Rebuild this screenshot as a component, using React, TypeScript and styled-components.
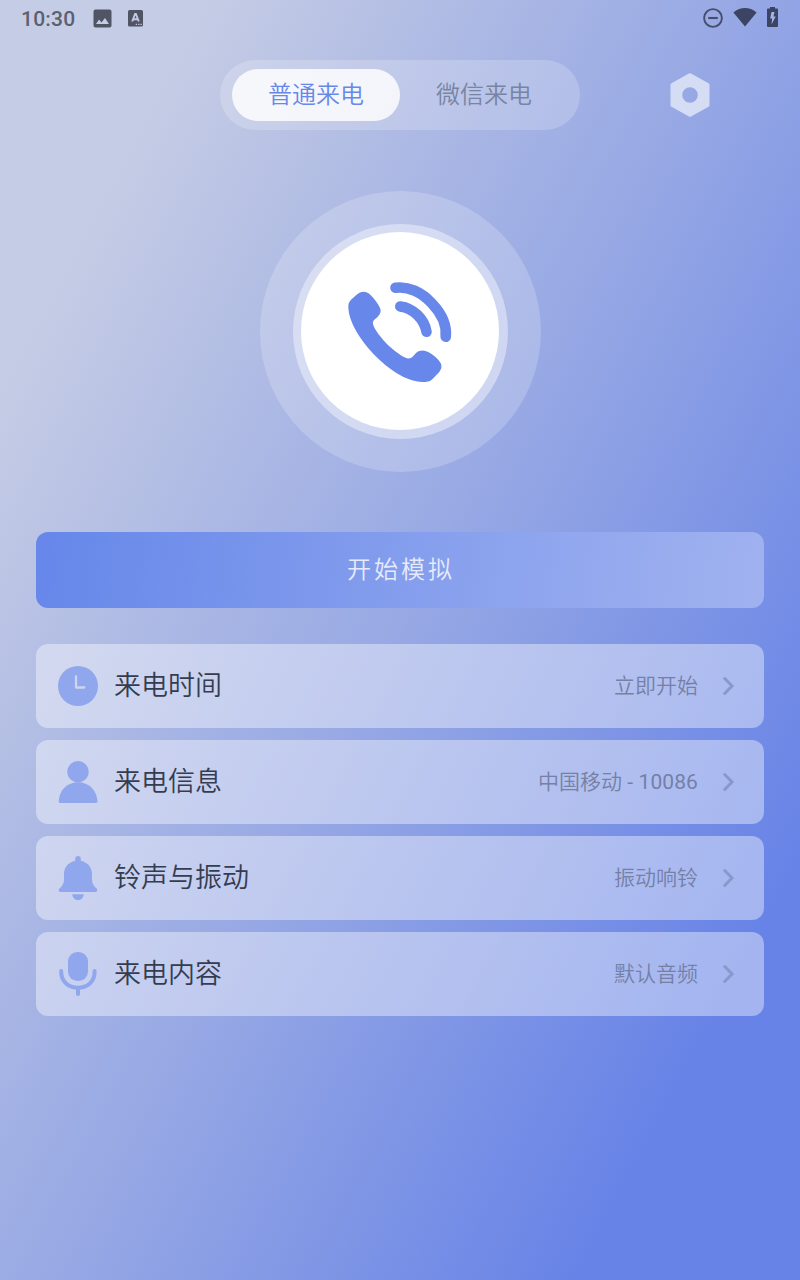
import React from "react";
import styled, { createGlobalStyle } from "styled-components";

const GlobalStyle = createGlobalStyle`
  * { box-sizing: border-box; }
  body { margin: 0; }
  button { font: inherit; border: 0; padding: 0; background: none; }
  svg { display: block; flex: none; }
`;

const Screen = styled.main`
  width: 800px;
  height: 1280px;
  overflow: hidden;
  display: flex;
  flex-direction: column;
  font-family: Roboto, "Noto Sans CJK SC", sans-serif;
  font-weight: 350;
  background: linear-gradient(118deg, #c5cce5 14%, #98a9e4 49%, #6783e7 85%);
`;

const StatusBar = styled.div`
  height: 36px;
  display: flex;
  align-items: center;
  justify-content: space-between;
  padding: 0 22px 0 21px;
`;

const StatusGroup = styled.div<{ $gap?: number }>`
  display: flex;
  align-items: center;
  gap: ${(p) => p.$gap ?? 0}px;
`;

const Clock = styled.span`
  width: 72px;
  font-size: 21px;
  line-height: 36px;
  padding-top: 1px;
  letter-spacing: 0.2px;
  font-weight: 500;
  color: #5c606f;
`;

const Header = styled.header`
  display: grid;
  grid-template-columns: 1fr 360px 1fr;
  margin-top: 24px;
  height: 70px;
  align-items: center;
`;

const Tabs = styled.div`
  grid-column: 2;
  height: 70px;
  border-radius: 35px;
  padding: 0 12px;
  display: flex;
  align-items: center;
  background: rgba(255, 255, 255, 0.2);
`;

const Tab = styled.button<{ $active?: boolean }>`
  width: 168px;
  height: 52px;
  border-radius: 26px;
  font-size: 24px;
  line-height: 51px;
  padding-top: 1px;
  color: ${(p) => (p.$active ? "#6788ea" : "#7884a3")};
  background: ${(p) => (p.$active ? "rgba(255, 255, 255, 0.82)" : "transparent")};
`;

const Settings = styled.button`
  justify-self: center;
  width: 40px;
`;

const CallHalo = styled.div`
  width: 281px;
  height: 281px;
  margin: 61px auto 0 260px;
  border-radius: 50%;
  display: flex;
  align-items: center;
  justify-content: center;
  background: rgba(255, 255, 255, 0.2);
`;

const CallDisc = styled.div`
  width: 215px;
  height: 215px;
  border-radius: 50%;
  padding: 8px 9px 9px 8px;
  background: rgba(255, 255, 255, 0.4);
`;

const CallCore = styled.div`
  width: 198px;
  height: 198px;
  border-radius: 50%;
  display: flex;
  align-items: center;
  justify-content: center;
  padding-top: 8px;
  background: #fff;
`;

const StartButton = styled.button`
  height: 76px;
  margin: 60px 36px 0;
  padding: 0 0 5px 2px;
  border-radius: 12px;
  font-size: 24px;
  letter-spacing: 3px;
  color: #e6ebfb;
  background: linear-gradient(98deg, #6788ea 2%, #8da4ee 65%, #9fb1ef 98%);
`;

const List = styled.div`
  display: flex;
  flex-direction: column;
  gap: 12px;
  margin: 36px 36px 0;
`;

const Row = styled.div`
  height: 84px;
  border-radius: 12px;
  display: flex;
  align-items: center;
  padding: 0 29px 0 21px;
  background: rgba(255, 255, 255, 0.4);
`;

const RowLabel = styled.span`
  flex: 1;
  margin-left: 15px;
  padding-bottom: 1px;
  font-size: 27px;
  line-height: 40px;
  color: #343d50;
`;

const RowValue = styled.span`
  margin-right: 24px;
  font-size: 21px;
  line-height: 32px;
  color: #7480a6;
`;

const Digits = styled.span`
  font-weight: 400;
  letter-spacing: 0.1px;
`;

const ImageIcon = () => (
  <svg width="19" height="19" viewBox="0 0 19 19" fill="#505463">
    <path fillRule="evenodd" d="M2.500.5h14a2 2 0 0 1 2 2v14a2 2 0 0 1-2 2h-14a2 2 0 0 1-2-2v-14a2 2 0 0 1 2-2zM3 15h13l-4-6-3.500 4.500-2.500-3z" />
  </svg>
);

const LetterIcon = () => (
  <svg width="15" height="17" viewBox="0 0 15 17">
    <rect width="15" height="16.500" rx="1.600" fill="#505463" />
    <path d="M4.200 11.500 7.100 4h.8l2.900 7.500M5.300 9.200h4.500" fill="none" stroke="#c3cbe5" strokeWidth="1.900" />
    <path d="M7.700 14.300h1.300M10.200 14.300h1.300M12.500 14.300h1.300" stroke="#c3cbe5" strokeWidth="1.300" />
  </svg>
);

const DndIcon = () => (
  <svg width="20" height="20" viewBox="0 0 20 20" fill="none" stroke="#454e6c" strokeWidth="1.900">
    <circle cx="10" cy="10" r="8.900" />
    <path d="M5.200 10h9.600" strokeWidth="2.100" />
  </svg>
);

const WifiIcon = () => (
  <svg width="24" height="20" viewBox="0 0 24 20" fill="#3b4563">
    <path d="M12 18.500.4 4.500C4 1.400 8 .1 12 .1s8 1.300 11.600 4.400z" />
  </svg>
);

const BatteryIcon = () => (
  <svg width="11" height="22" viewBox="0 0 11 22">
    <path d="M3 0h5v1.500h2a1 1 0 0 1 1 1V19a1 1 0 0 1-1 1H1a1 1 0 0 1-1-1V2.500a1 1 0 0 1 1-1h2z" fill="#3b4563" />
    <path d="M7.500 5H4.500L3.200 11.500h2L4.500 17.500l4.200-8H6.400z" fill="#a5b5ea" />
  </svg>
);

const SettingsIcon = () => (
  <svg width="40" height="44" viewBox="0 0 40 44">
    <path
      fill="#d5ddf5"
      fillRule="evenodd"
      d="M19 .4q1-.5 2 0l17.500 9.900q1 .5 1 1.500v20.400q0 1-1 1.500L21 43.600q-1 .5-2 0L1.500 33.700q-1-.5-1-1.500V11.800q0-1 1-1.500zM20 14.200a7.800 7.800 0 1 0 0 15.600 7.800 7.800 0 0 0 0-15.600z"
    />
  </svg>
);

const PhoneIcon = () => (
  <svg width="140" height="130" viewBox="0 0 140 130">
    <path
      fill="#6788ea"
      d="M21 29.800 26 25.300C31 20.800 36 20.800 40 24.500C44 28 48 33.500 50 38C51.500 41.500 50 44.500 47.500 47C44.500 50 42.500 50.500 43 54C44 59 51 68 59 76C67 83 75 88.500 78.500 88.500C82 88.500 83.500 85.500 86 83C90.500 79.500 95 80 100 83C104 85.500 108 88.500 110.300 92.500C112.300 96 111.500 99 109.300 102L102.500 109C99.500 111.800 97 112 92.500 112C76 111.500 58 99 43.500 84C30 69.500 18.700 52 18.300 37.500C18.300 34 18.900 32 21 29.800Z"
    />
    <g fill="none" stroke="#6788ea" strokeWidth="10.600" strokeLinecap="round">
      <path d="M65.500 17.800C78 16 91.500 22 102 33.500C112 44 117 55 115.700 66.800" />
      <path d="M70.300 36.500C83 38 94.500 49 96.500 61.800" />
    </g>
  </svg>
);

const TimeIcon = () => (
  <svg width="42" height="48" viewBox="0 0 42 48">
    <circle cx="21" cy="24" r="20" fill="#91a7ed" />
    <path d="M19 14.300v11.200h8.300" fill="none" stroke="#cbd5f2" strokeWidth="2.300" strokeLinecap="round" strokeLinejoin="round" />
  </svg>
);

const PersonIcon = () => (
  <svg width="42" height="48" viewBox="0 0 42 48" fill="#91a7ed">
    <circle cx="21" cy="13.700" r="10.700" />
    <path d="M1.700 43.200C2.200 32 10.500 24.200 21 24.200S39.800 32 40.500 43.200q0 1.800-1.500 1.800H3q-1.300 0-1.300-1.800z" />
  </svg>
);

const BellIcon = () => (
  <svg width="42" height="48" viewBox="0 0 42 48" fill="#91a7ed">
    <path d="M18.200 6.700V4.700a2.800 2.800 0 0 1 5.600 0v2C31 8.400 35 13.500 35 20v5.500c0 3.800 1.700 6.700 4.600 9 1.400 1.500.5 3.500-1.400 3.500H3.800c-1.900 0-2.800-2-1.400-3.500C5.300 32.200 7 29.300 7 25.500V20C7 13.500 11 8.400 18.200 6.700z" />
    <path d="M15.200 40.200h11.600c-.5 3.600-2.700 5.800-5.800 5.800s-5.300-2.200-5.800-5.800z" />
  </svg>
);

const MicIcon = () => (
  <svg width="42" height="48" viewBox="0 0 42 48">
    <rect x="11" y="2" width="20" height="29" rx="9.500" fill="#91a7ed" />
    <path d="M4.200 21v1C4.200 31.500 11.500 37.700 21 37.700S37.600 31.500 37.600 22v-1M21 38v6" fill="none" stroke="#91a7ed" strokeWidth="4" strokeLinecap="round" />
  </svg>
);

const Chevron = () => (
  <svg width="13" height="20" viewBox="0 0 13 20" fill="none" stroke="#8998ca" strokeWidth="3">
    <path d="M2.700 2.500 10 10l-7.300 7.500" strokeLinecap="round" />
  </svg>
);

const rows = [
  { icon: <TimeIcon />, label: "来电时间", value: "立即开始" },
  { icon: <PersonIcon />, label: "来电信息", value: "中国移动", number: " - 10086" },
  { icon: <BellIcon />, label: "铃声与振动", value: "振动响铃" },
  { icon: <MicIcon />, label: "来电内容", value: "默认音频" },
];

export default function App() {
  return (
    <Screen>
      <GlobalStyle />
      <StatusBar>
        <StatusGroup>
          <Clock>10:30</Clock>
          <StatusGroup $gap={16}>
            <ImageIcon />
            <LetterIcon />
          </StatusGroup>
        </StatusGroup>
        <StatusGroup $gap={10}>
          <DndIcon />
          <WifiIcon />
          <BatteryIcon />
        </StatusGroup>
      </StatusBar>
      <Header>
        <Tabs>
          <Tab $active>普通来电</Tab>
          <Tab>微信来电</Tab>
        </Tabs>
        <Settings aria-label="设置">
          <SettingsIcon />
        </Settings>
      </Header>
      <CallHalo>
        <CallDisc>
          <CallCore>
            <PhoneIcon />
          </CallCore>
        </CallDisc>
      </CallHalo>
      <StartButton>开始模拟</StartButton>
      <List>
        {rows.map((row) => (
          <Row key={row.label}>
            {row.icon}
            <RowLabel>{row.label}</RowLabel>
            <RowValue>
              {row.value}
              {row.number && <Digits>{row.number}</Digits>}
            </RowValue>
            <Chevron />
          </Row>
        ))}
      </List>
    </Screen>
  );
}
